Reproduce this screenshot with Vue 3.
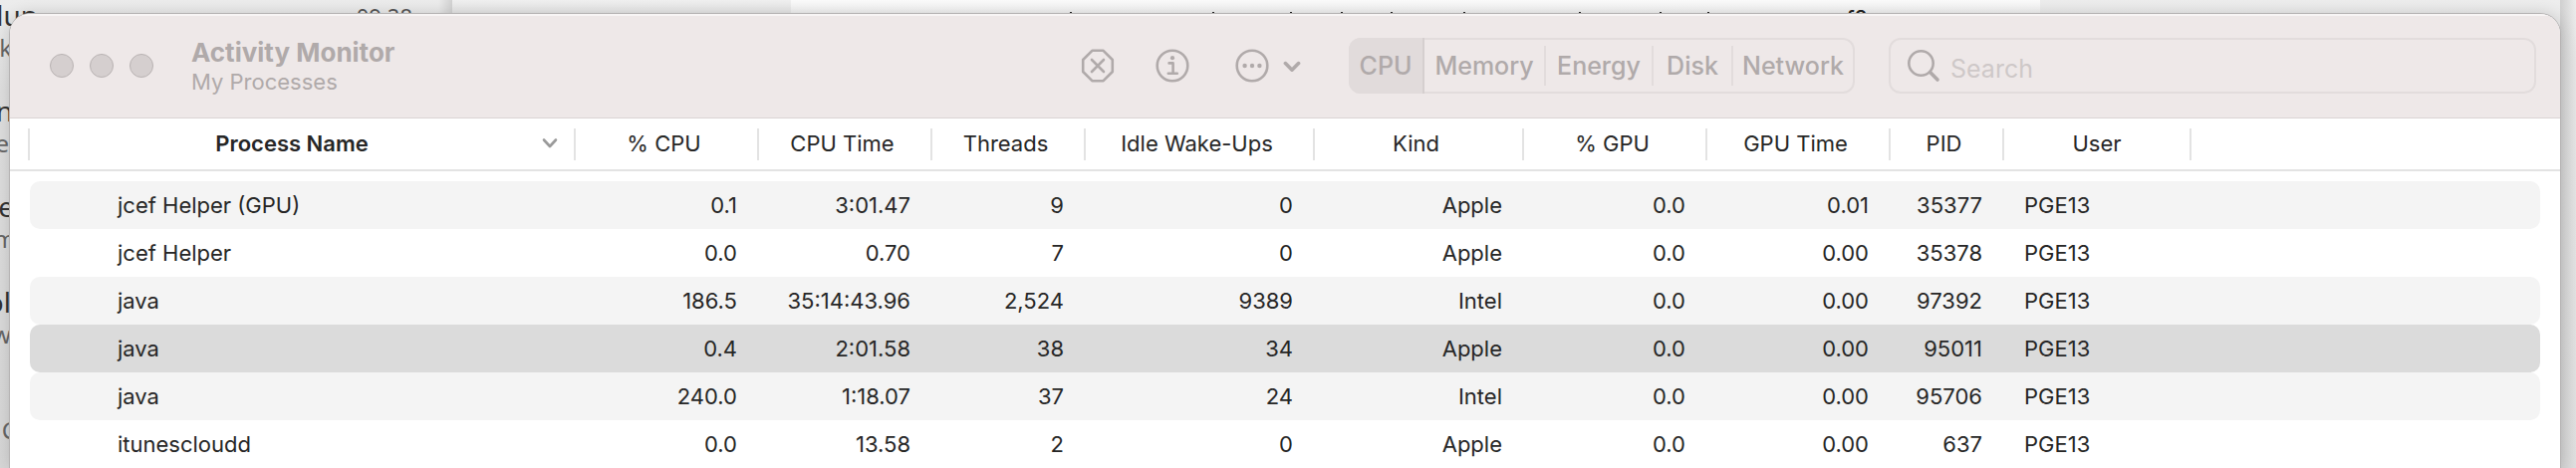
<script setup>
import { ref } from 'vue'

const views = ['CPU', 'Memory', 'Energy', 'Disk', 'Network']
const activeView = ref('CPU')
const query = ref('')
const selectedPid = ref('95011')

const columns = [
  { key: 'name', label: 'Process Name' },
  { key: 'cpu', label: '% CPU' },
  { key: 'cpuTime', label: 'CPU Time' },
  { key: 'threads', label: 'Threads' },
  { key: 'wakeups', label: 'Idle Wake-Ups' },
  { key: 'kind', label: 'Kind' },
  { key: 'gpu', label: '% GPU' },
  { key: 'gpuTime', label: 'GPU Time' },
  { key: 'pid', label: 'PID' },
  { key: 'user', label: 'User' },
]

const processes = [
  { name: 'jcef Helper (GPU)', cpu: '0.1', cpuTime: '3:01.47', threads: '9', wakeups: '0', kind: 'Apple', gpu: '0.0', gpuTime: '0.01', pid: '35377', user: 'PGE13' },
  { name: 'jcef Helper', cpu: '0.0', cpuTime: '0.70', threads: '7', wakeups: '0', kind: 'Apple', gpu: '0.0', gpuTime: '0.00', pid: '35378', user: 'PGE13' },
  { name: 'java', cpu: '186.5', cpuTime: '35:14:43.96', threads: '2,524', wakeups: '9389', kind: 'Intel', gpu: '0.0', gpuTime: '0.00', pid: '97392', user: 'PGE13' },
  { name: 'java', cpu: '0.4', cpuTime: '2:01.58', threads: '38', wakeups: '34', kind: 'Apple', gpu: '0.0', gpuTime: '0.00', pid: '95011', user: 'PGE13' },
  { name: 'java', cpu: '240.0', cpuTime: '1:18.07', threads: '37', wakeups: '24', kind: 'Intel', gpu: '0.0', gpuTime: '0.00', pid: '95706', user: 'PGE13' },
  { name: 'itunescloudd', cpu: '0.0', cpuTime: '13.58', threads: '2', wakeups: '0', kind: 'Apple', gpu: '0.0', gpuTime: '0.00', pid: '637', user: 'PGE13' },
]

// Visible ends of the list lines in the window behind
const behind = [
  { title: 'dup', titleEdge: 38, sub: 'k', subEdge: 12 },
  { title: 'n', titleEdge: 13, sub: 'e', subEdge: 9 },
  { title: 'se', titleEdge: 14, sub: 'm', subEdge: 16 },
  { title: 'ol', titleEdge: 11, sub: 'w', subEdge: 11 },
  { title: '', titleEdge: 9, sub: 'C', subEdge: 17 },
]
const ascenders = [50, 193, 271, 322, 372, 445, 561, 642, 690]
</script>

<template>
  <div class="desktop">
    <div class="backdrop" aria-hidden="true">
      <div class="pane list">
        <div v-for="(b, i) in behind" :key="i" class="item">
          <span class="line strong" :style="{ width: b.titleEdge + 'px' }">{{ b.title }}</span>
          <span class="line" :style="{ width: b.subEdge + 'px' }">{{ b.sub }}</span>
        </div>
        <span class="time">09:28</span>
      </div>
      <div class="pane gutter"></div>
      <div class="pane page">
        <svg class="tops" width="700" height="4" viewBox="0 0 700 4">
          <rect x="0" y="2" width="3" height="2" />
          <rect v-for="x in ascenders" :key="x" :x="x - 1" y="1" width="2" height="3" />
        </svg>
        <span class="tail">f?</span>
      </div>
      <div class="pane rest"></div>
    </div>

    <main class="window">
      <header class="titlebar">
        <div class="lights">
          <button type="button" aria-label="Close"></button>
          <button type="button" aria-label="Minimize"></button>
          <button type="button" aria-label="Zoom"></button>
        </div>
        <div class="title">
          <h1>Activity Monitor</h1>
          <p>My Processes</p>
        </div>
        <div class="actions">
          <button type="button" aria-label="Stop process">
            <svg width="34" height="34" viewBox="0 0 34 34">
              <path d="M11.4 1.800h11.200l9.200 9.200v12l-9.200 9.200H11.400L2.200 23V11z" stroke-linejoin="round" />
              <path d="M11 11l12 12M23 11L11 23" stroke-linecap="round" />
            </svg>
          </button>
          <button type="button" aria-label="Process info">
            <svg width="34" height="34" viewBox="0 0 34 34">
              <circle cx="17" cy="17" r="15.3" />
              <path d="M13.6 14.4h4v10M12.8 24.8h9" stroke-linecap="round" stroke-linejoin="round" />
              <circle class="dot" cx="17" cy="9.2" r="2.1" />
            </svg>
          </button>
          <button type="button" class="more" aria-label="More options">
            <svg width="34" height="34" viewBox="0 0 34 34">
              <circle cx="17" cy="17" r="15.3" />
              <circle class="dot" cx="9.6" cy="17" r="2.2" />
              <circle class="dot" cx="17" cy="17" r="2.2" />
              <circle class="dot" cx="24.4" cy="17" r="2.2" />
            </svg>
            <svg width="18" height="34" viewBox="0 0 18 34">
              <path class="bold" d="M2.4 14.6L9 21.2l6.6-6.6" stroke-linecap="round" stroke-linejoin="round" />
            </svg>
          </button>
        </div>
        <div class="segments">
          <button
            v-for="v in views"
            :key="v"
            type="button"
            :class="{ active: v === activeView }"
            @click="activeView = v"
          ><span>{{ v }}</span></button>
        </div>
        <label class="search">
          <svg width="34" height="34" viewBox="0 0 34 34">
            <circle cx="14.5" cy="14.5" r="12.2" />
            <path class="bold" d="M23.6 23.6l7.4 7.4" stroke-linecap="round" />
          </svg>
          <input v-model="query" type="text" placeholder="Search" aria-label="Search" />
        </label>
      </header>

      <table>
        <colgroup>
          <col class="c-edge" />
          <col v-for="c in columns" :key="c.key" :class="'c-' + c.key" />
          <col />
          <col class="c-edge" />
        </colgroup>
        <thead>
          <tr>
            <td><span class="rule"></span></td>
            <th v-for="c in columns" :key="c.key" scope="col" :class="'h-' + c.key">
              <button type="button">
                <span>{{ c.label }}</span>
                <svg v-if="c.key === 'name'" width="16" height="12" viewBox="0 0 16 12">
                  <path d="M2 2.5l6 6.5 6-6.5" stroke-linecap="round" stroke-linejoin="round" />
                </svg>
              </button>
            </th>
            <td></td>
            <td></td>
          </tr>
        </thead>
        <tbody>
          <tr
            v-for="p in processes"
            :key="p.pid"
            :class="{ selected: p.pid === selectedPid }"
            @click="selectedPid = p.pid"
          >
            <td class="edge"></td>
            <td v-for="c in columns" :key="c.key" :class="'d-' + c.key">{{ p[c.key] }}</td>
            <td class="fill"></td>
            <td class="edge"></td>
          </tr>
        </tbody>
      </table>
    </main>
  </div>
</template>

<style>
body {
  margin: 0;
  background: #e2e2e2;
}
</style>

<style scoped>
.desktop {
  position: relative;
  height: 100vh;
  overflow: hidden;
  box-sizing: border-box;
  padding: 14px 16px 0 10px;
  font-family: Inter, "Liberation Sans", sans-serif;
  font-size: 22px;
  color: #262626;
}
button {
  margin: 0;
  padding: 0;
  border: 0;
  background: none;
  color: inherit;
  font: inherit;
}
svg {
  display: block;
  flex: none;
  fill: none;
  stroke: #b0aaaa;
  stroke-width: 2.6;
}
svg .bold {
  stroke-width: 3.6;
}
svg .dot {
  fill: #b0aaaa;
  stroke: none;
}

/* windows behind */
.backdrop {
  position: absolute;
  inset: 0;
  display: flex;
}
.pane {
  position: relative;
  overflow: hidden;
}
.list {
  width: 454px;
  background: linear-gradient(to right, transparent 440px, #d2d2d2), linear-gradient(#ececec, #dedede 90px, #d6d6d6);
}
.gutter {
  width: 340px;
  background: linear-gradient(#f0f0f0, #e4e4e4 14px);
}
.page {
  width: 1254px;
  background: linear-gradient(#fbfbfb, #f0f0f0 14px);
}
.rest {
  flex: 1;
  background: linear-gradient(to right, transparent 522px, #cfcfcf 522px, transparent 538px), linear-gradient(#ededed, #e4e4e4 60px, #dedede);
}
.item {
  height: 96px;
  font-family: "Noto Sans", sans-serif;
  color: #666;
}
.line {
  display: flex;
  justify-content: flex-end;
  height: 32px;
  line-height: 32px;
  font-size: 24px;
}
.strong {
  line-height: 30px;
  color: #333;
  font-size: 28px;
}
.time {
  position: absolute;
  top: 0;
  right: 40px;
  color: #555;
  font-family: "Noto Sans", sans-serif;
  line-height: 32px;
}
.tops {
  position: absolute;
  top: 11px;
  left: 231px;
  stroke: none;
  fill: #222;
}
.tail {
  position: absolute;
  top: 4px;
  left: 1059px;
  color: #222;
  font-size: 24px;
  line-height: 32px;
}

/* window */
.window {
  position: relative;
  height: 100%;
  overflow: hidden;
  background: #fff;
  border-radius: 20px 20px 0 0;
  box-shadow: 0 0 0 1px #b4b2b2, 0 0 16px rgba(0, 0, 0, 0.16);
}
.titlebar {
  display: flex;
  align-items: center;
  box-sizing: border-box;
  height: 105px;
  padding: 0 24px 0 40px;
  background: #eee8e8;
  border-bottom: 1px solid #dad5d5;
  box-shadow: inset 0 2px 0 #f8f5f5;
  color: #b0aaaa;
}
.lights {
  display: flex;
  gap: 16px;
}
.lights button {
  width: 24px;
  height: 24px;
  box-sizing: border-box;
  border: 1px solid #b9b3b3;
  border-radius: 50%;
  background: #d5cfcf;
}
.title {
  flex: 1;
  margin-left: 38px;
}
h1,
p {
  margin: 0;
}
h1 {
  font-size: 26px;
  line-height: 32px;
  font-weight: 700;
}
p {
  line-height: 26px;
}
.actions {
  display: flex;
  gap: 41px;
  margin-right: 48px;
}
.more {
  display: flex;
  gap: 14px;
  margin-left: 5px;
}
.segments {
  display: grid;
  grid-template-columns: 76px 122px 108px 80px 122px;
  height: 56px;
  box-sizing: border-box;
  border-radius: 12px;
  box-shadow: inset 0 0 0 2px #e2dcdc;
  overflow: hidden;
  font-size: 25px;
  font-weight: 500;
}
.segments button {
  display: flex;
  align-items: center;
}
.segments span {
  flex: 1;
  line-height: 40px;
  border-right: 2px solid #e2dcdc;
}
.segments button:last-child span {
  border-right-color: transparent;
}
.segments .active {
  background: #e1dbdb;
}
.segments .active span {
  line-height: 56px;
  border-right-color: #d5cfcf;
}
.search {
  display: flex;
  align-items: center;
  flex: 0 1 650px;
  box-sizing: border-box;
  height: 56px;
  margin-left: 34px;
  padding: 0 16px;
  gap: 10px;
  border: 2px solid #e2dcdc;
  border-radius: 12px;
}
.search input {
  flex: 1;
  min-width: 0;
  height: 52px;
  box-sizing: border-box;
  padding: 6px 0 0;
  border: 0;
  outline: 0;
  background: none;
  color: #8c8686;
  font-family: inherit;
  font-size: 25px;
}
.search input::placeholder {
  color: #cec8c8;
  opacity: 1;
}

/* table */
table {
  width: 100%;
  table-layout: fixed;
  border-collapse: separate;
  border-spacing: 0;
}
.c-edge { width: 20px; }
.c-name { width: 548px; }
.c-cpu,
.c-gpu,
.c-gpuTime { width: 184px; }
.c-cpuTime { width: 174px; }
.c-threads { width: 154px; }
.c-wakeups { width: 230px; }
.c-kind { width: 210px; }
.c-pid { width: 114px; }
.c-user { width: 188px; }
th,
td {
  padding: 0;
}
thead th,
thead td {
  height: 51px;
  border-bottom: 2px solid #e3e3e3;
  font-weight: 400;
}
th button {
  display: flex;
  align-items: center;
  justify-content: center;
  box-sizing: border-box;
  width: 100%;
  height: 32px;
  padding: 0 5px 2px 0;
  border-right: 2px solid #e3e3e3;
}
.h-name button {
  padding: 0 16px 2px 12px;
  font-weight: 600;
}
.h-user button {
  padding-right: 0;
}
.h-name button span {
  flex: 1;
}
.h-name svg {
  stroke: #9a9a9a;
}
.rule {
  display: block;
  height: 32px;
  border-right: 2px solid #e3e3e3;
}
tbody::before {
  content: "";
  display: block;
  height: 10px;
}
tbody td {
  height: 48px;
  line-height: 48px;
  padding: 0 22px 0 0;
  text-align: right;
}
tbody td.edge {
  padding: 0;
}
tbody .d-name {
  padding-left: 88px;
  text-align: left;
  border-radius: 10px 0 0 10px;
}
tbody .d-user {
  padding-left: 20px;
  text-align: left;
}
.fill {
  border-radius: 0 10px 10px 0;
}
tbody tr:nth-child(odd) td:not(.edge) {
  background: #f4f4f4;
}
tbody tr.selected td:not(.edge) {
  background: #dbdbdb;
}
</style>
